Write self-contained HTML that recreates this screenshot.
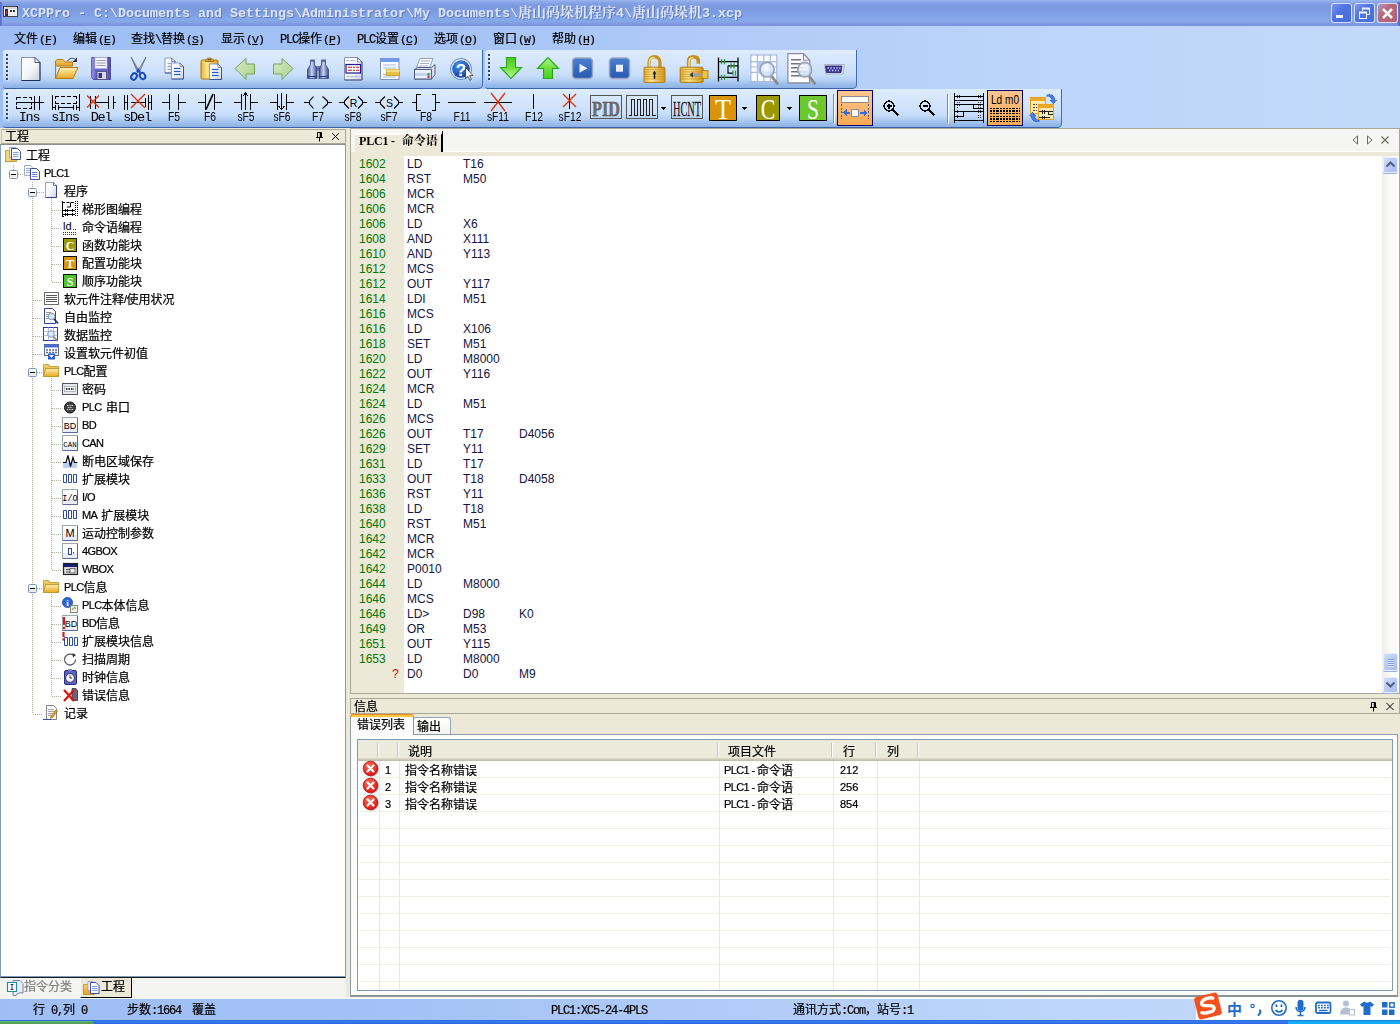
<!DOCTYPE html>
<html lang="zh-CN"><head><meta charset="utf-8"><title>XCPPro</title>
<style>

html,body{margin:0;padding:0}
body{width:1400px;height:1024px;overflow:hidden;position:relative;background:#ece9d8;
 font-family:"Liberation Sans","Noto Sans CJK SC","WenQuanYi Zen Hei",sans-serif;font-size:12px;color:#000}
.a{position:absolute}
.ui{font-family:"Liberation Mono","Noto Sans CJK SC","WenQuanYi Zen Hei",monospace;font-size:12px;white-space:nowrap}
.ui b,.ui span.l{font-size:12px;letter-spacing:-1.2px}
.t{position:absolute;white-space:nowrap;line-height:14px}
.ui,.tv{margin-top:1px;-webkit-text-stroke:.22px currentColor}
.tv .l{position:relative;top:-1px}
.ui .l{position:relative;top:0}
svg{position:absolute;overflow:visible}

.tl{font-family:"Liberation Mono",monospace;font-size:13.34px;letter-spacing:0;font-weight:bold}
.tc{font-family:"Liberation Serif","Noto Serif CJK SC",serif;font-size:14px;font-weight:bold}
.ui.mn span.k{font-size:11.500px;letter-spacing:-.9px;top:-.5px}

.tb{background:linear-gradient(to bottom,#ddecfe 0,#d2e4fc 42%,#c8defa 66%,#b3cff4 80%,#9cbeec 90%,#8cb1e6 100%);border-bottom:1px solid #3a62a8;border-right:1px solid #3e6cc0;box-sizing:border-box;border-radius:3px 0 5px 3px/3px 0 4px 3px}
.grip{position:absolute;width:2px;box-shadow:1px 1px 0 rgba(255,255,255,.35);background:repeating-linear-gradient(to bottom,#27418c 0,#27418c 2px,transparent 2px,transparent 4px)}

.lbm{font-family:"Liberation Mono",monospace;font-size:13.500px;letter-spacing:-1.200px;line-height:14px;color:#000}
.lbs{font-family:"Liberation Sans",sans-serif;font-size:12px;line-height:14px;color:#000;transform:scaleX(.86)}

.tv{font-family:"Liberation Sans","Noto Sans CJK SC","WenQuanYi Zen Hei",sans-serif;font-size:12px;line-height:14px;color:#000}

.cd{font-family:"Liberation Sans",sans-serif;font-size:12px;line-height:15px;color:#141444}

.tv .l{font-size:11px;letter-spacing:-.6px;word-spacing:2px}

</style></head>
<body>
<div class="a" id="dock" style="left:0;top:0;width:1400px;height:128px;background:linear-gradient(to right,#9ebef5 0,#a4c2f6 30%,#bdd5f9 75%,#c3d9fa 100%)"></div>
<div class="a" id="titlebar" style="left:0;top:0;width:1400px;height:26px;background:linear-gradient(to bottom,#9db6ee 0,#8ba7e8 2px,#7e9be2 5px,#7c99e0 9px,#7fa0e4 14px,#84a8e8 19px,#86a6e8 22px,#7e97e0 24px,#7a93dc 26px)"></div>
<div class="a" style="left:0;top:2px;width:2px;height:24px;background:linear-gradient(to right,#5c66cc,#7486da)"></div><div class="a" style="left:1397px;top:2px;width:3px;height:24px;background:linear-gradient(to right,#7486da,#5660c8)"></div>
<svg style="left:3px;top:5px" width="16" height="14" viewBox="0 0 16 14"><rect x="0.5" y="1.5" width="14" height="10" fill="#f4f4f4" stroke="#444"/><rect x="1" y="2" width="13" height="2" fill="#d8d8d8"/><rect x="2" y="4" width="3" height="7" fill="#1a2a90"/><rect x="3" y="6" width="1" height="3" fill="#e03030"/><rect x="7" y="5" width="2" height="2" fill="#333"/><rect x="10" y="5" width="2" height="2" fill="#333"/></svg>
<div class="a" style="left:1331px;top:3px;width:19px;height:18px;border:1px solid rgba(240,244,255,.8);border-radius:3px;background:linear-gradient(135deg,#7f98ea 0,#4f74e2 40%,#4270dc 100%)"></div><div class="a" style="left:1336px;top:15px;width:7px;height:3px;background:#f4f6fd"></div><div class="a" style="left:1354px;top:3px;width:19px;height:18px;border:1px solid rgba(240,244,255,.8);border-radius:3px;background:linear-gradient(135deg,#7f98ea 0,#4f74e2 40%,#4270dc 100%)"></div><svg style="left:1354px;top:3px" width="21" height="21" viewBox="0 0 21 21"><g fill="none" stroke="#f4f6fd"><path d="M8.5 8V5.5h7v6H13" stroke-width="1"/><path d="M8 5.5h8" stroke-width="2"/><rect x="5.5" y="9.5" width="7" height="6"/><path d="M5 9.5h8" stroke-width="2"/></g></svg><div class="a" style="left:1377px;top:3px;width:19px;height:18px;border:1px solid rgba(240,244,255,.8);border-radius:3px;background:linear-gradient(135deg,#b49cc4 0,#b46c80 35%,#b06272 100%)"></div><svg style="left:1377px;top:3px" width="21" height="21" viewBox="0 0 21 21"><path d="M6 6l9 9M15 6l-9 9" stroke="#fdf6f4" stroke-width="2.500" fill="none"/></svg>
<svg width="0" height="0" style="left:0;top:0"><defs>
<linearGradient id="gPage" x1="0" y1="0" x2="1" y2="1"><stop offset="0" stop-color="#ffffff"/><stop offset="0.55" stop-color="#f4f5fa"/><stop offset="1" stop-color="#c9cde0"/></linearGradient>
<linearGradient id="gFold" x1="0" y1="0" x2="0" y2="1"><stop offset="0" stop-color="#fff0b0"/><stop offset="1" stop-color="#eaa820"/></linearGradient>
<linearGradient id="gFoldB" x1="0" y1="0" x2="0" y2="1"><stop offset="0" stop-color="#f6d070"/><stop offset="1" stop-color="#e0a020"/></linearGradient>
<linearGradient id="gGreenD" x1="0" y1="0" x2="0" y2="1"><stop offset="0" stop-color="#4cc820"/><stop offset="0.5" stop-color="#6fe040"/><stop offset="1" stop-color="#c8f8a8"/></linearGradient>
<linearGradient id="gGreenU" x1="0" y1="0" x2="0" y2="1"><stop offset="0" stop-color="#b8f498"/><stop offset="0.5" stop-color="#6fe040"/><stop offset="1" stop-color="#4cd020"/></linearGradient>
<linearGradient id="gLGreen" x1="0" y1="0" x2="1" y2="1"><stop offset="0" stop-color="#d4eac4"/><stop offset="1" stop-color="#a9d48c"/></linearGradient>
<linearGradient id="gBlueBtn" x1="0" y1="0" x2="0" y2="1"><stop offset="0" stop-color="#4a80d0"/><stop offset="1" stop-color="#2658b0"/></linearGradient>
<linearGradient id="gGold" x1="0" y1="0" x2="1" y2="0"><stop offset="0" stop-color="#e8b030"/><stop offset="0.35" stop-color="#ffe890"/><stop offset="1" stop-color="#d89818"/></linearGradient>
<linearGradient id="gBino" x1="0" y1="0" x2="1" y2="0"><stop offset="0" stop-color="#3a4a8a"/><stop offset="0.45" stop-color="#c8d4f0"/><stop offset="1" stop-color="#3a4a8a"/></linearGradient>
<radialGradient id="gLens" cx="0.4" cy="0.35" r="0.7"><stop offset="0" stop-color="#ffffff"/><stop offset="1" stop-color="#b8d4f4"/></radialGradient>
<radialGradient id="gHelp" cx="0.4" cy="0.3" r="0.8"><stop offset="0" stop-color="#4a90e8"/><stop offset="1" stop-color="#0a3a9c"/></radialGradient>
<linearGradient id="gTb" x1="0" y1="0" x2="0" y2="1"><stop offset="0" stop-color="#dcebfe"/><stop offset="1" stop-color="#86ade4"/></linearGradient>
<radialGradient id="gErr" cx="0.4" cy="0.3" r="0.8"><stop offset="0" stop-color="#ff6a50"/><stop offset="1" stop-color="#d80c0c"/></radialGradient>
</defs></svg>
<div class="a tb" style="left:3px;top:50px;width:480px;height:39px"></div>
<div class="grip" style="left:6px;top:54px;height:26px"></div>
<div class="a tb" style="left:485px;top:50px;width:372px;height:39px"></div>
<div class="grip" style="left:488px;top:54px;height:26px"></div>
<svg style="left:19px;top:57px" width="24" height="24" viewBox="0 0 24 24"><path d="M2.500 .5h13.500l5 5v18h-18.500z" fill="url(#gPage)" stroke="#8a92b0"/><path d="M21 5.500v18H2.500" fill="none" stroke="#1e2c60" stroke-width="1"/><path d="M16 .5v5h5z" fill="#fff" stroke="#1e2c60" stroke-width=".8"/></svg>
<svg style="left:54px;top:57px" width="24" height="24" viewBox="0 0 24 24"><path d="M1.5 5c0-1.5 1-2.5 2.5-2.5h5l2 2.500h7.500v4h-17z" fill="url(#gFoldB)" stroke="#b87a10"/><path d="M1.500 21.500v-16" stroke="#b87a10" fill="none"/><path d="M1.500 21.500l4.500-11h18l-5 11z" fill="url(#gFold)" stroke="#b87a10"/><path d="M13.500 4c2-3 5.500-3.500 8-1.500" fill="none" stroke="#334" stroke-width="1"/><path d="M23 .5v4.500h-4.500z" fill="#334"/></svg>
<svg style="left:89px;top:57px" width="24" height="24" viewBox="0 0 24 24"><path d="M2.500 .5h19v22h-17l-2-2z" fill="#6a66c8" stroke="#4a48a0"/><rect x="2.500" y=".5" width="3" height="21" fill="#8884dc"/><rect x="19" y=".5" width="2.500" height="22" fill="#5652b4"/><rect x="6" y=".5" width="12" height="11" fill="#f4f4fa" stroke="#b0b0cc" stroke-width=".6"/><path d="M7.500 3.500h9M7.500 6h9M7.500 8.500h9" stroke="#9a9ab0" stroke-width="1"/><rect x="8" y="14.500" width="9.500" height="8" fill="#d8d8e4" stroke="#444478" stroke-width=".8"/><rect x="9.500" y="16" width="3.500" height="5" fill="#343478"/></svg>
<svg style="left:126px;top:57px" width="24" height="24" viewBox="0 0 24 24"><path d="M5 0l6.500 15h2.300z" fill="#8c96a8" stroke="#4a5060"  stroke-width=".6"/><path d="M20 0l-6.500 15h-2.300z" fill="#b4bccc" stroke="#4a5060" stroke-width=".6"/><ellipse cx="8" cy="19.500" rx="2.600" ry="3.400" transform="rotate(30 8 19.500)" fill="none" stroke="#1848c8" stroke-width="2"/><ellipse cx="16.500" cy="19" rx="2.600" ry="3.200" transform="rotate(-30 16.500 19)" fill="none" stroke="#1848c8" stroke-width="2"/><path d="M11 15.500l1.500-2.500 1.500 2.500" stroke="#1848c8" stroke-width="2" fill="none"/></svg>
<svg style="left:162.5px;top:57px" width="24" height="24" viewBox="0 0 24 24"><path d="M2 1h6.5l3.500 3.500v11.5h-10z" fill="url(#gPage)" stroke="#8892b8" stroke-width=".9"/><path d="M12 4.5v11.5h-10" fill="none" stroke="#3048a0" stroke-width=".9"/><path d="M8.5 1v3.500h3.500z" fill="#fff" stroke="#3048a0" stroke-width=".6"/><path d="M4.5 6.5h4.5" stroke="#88a8e8" stroke-width="1.200"/><path d="M4.5 9.5h4.5" stroke="#88a8e8" stroke-width="1.200"/><path d="M4.5 12.5h4.5" stroke="#88a8e8" stroke-width="1.200"/><path d="M8.5 6h8.5l3.500 3.500v12.5h-12z" fill="url(#gPage)" stroke="#8892b8" stroke-width=".9"/><path d="M20.5 9.5v12.5h-12" fill="none" stroke="#3048a0" stroke-width=".9"/><path d="M17 6v3.500h3.500z" fill="#fff" stroke="#3048a0" stroke-width=".6"/><path d="M11 11.5h6.5" stroke="#2858d0" stroke-width="1.200"/><path d="M11 14.5h6.5" stroke="#2858d0" stroke-width="1.200"/><path d="M11 17.5h6.5" stroke="#2858d0" stroke-width="1.200"/></svg>
<svg style="left:200px;top:57px" width="24" height="24" viewBox="0 0 24 24"><rect x="1" y="3" width="17" height="19" rx="1.500" fill="url(#gGold)" stroke="#b07808"/><path d="M5.500 4.500c0-2 1.500-3.500 4-3.500s4 1.500 4 3.500z" fill="#e8b848" stroke="#8a5c08" stroke-width=".8"/><rect x="7.500" y="2.300" width="4" height="1" fill="#5a4008"/><path d="M9.5 7h8.5l3.500 3.500v12h-12z" fill="url(#gPage)" stroke="#8892b8" stroke-width=".9"/><path d="M21.5 10.5v12h-12" fill="none" stroke="#3048a0" stroke-width=".9"/><path d="M18 7v3.500h3.500z" fill="#fff" stroke="#3048a0" stroke-width=".6"/><path d="M12 12.5h6.5" stroke="#2858d0" stroke-width="1.200"/><path d="M12 15.5h6.5" stroke="#2858d0" stroke-width="1.200"/><path d="M12 18.5h6.5" stroke="#2858d0" stroke-width="1.200"/></svg>
<svg style="left:234px;top:57px" width="24" height="24" viewBox="0 0 24 24"><path d="M1 11.500l11-10v5.500h8.500v10h-8.500v5.500z" fill="url(#gLGreen)" stroke="#7aa062" stroke-width="1"/></svg>
<svg style="left:271px;top:57px" width="24" height="24" viewBox="0 0 24 24"><path d="M22 11.500l-11-10v5.500h-8.500v10h8.500v5.500z" fill="url(#gLGreen)" stroke="#7aa062" stroke-width="1"/></svg>
<svg style="left:306px;top:57px" width="24" height="24" viewBox="0 0 24 24"><rect x="9.500" y="9" width="5" height="4.500" fill="#6a78b0"/><path d="M4.500 4h4v3.500l2.500 5v9h-9.500v-9l3-5z" fill="url(#gBino)" stroke="#2a3878" stroke-width=".7"/><path d="M15.500 4h4v3.500l3 5v9h-9.500v-9l2.500-5z" fill="url(#gBino)" stroke="#2a3878" stroke-width=".7"/><rect x="4" y="2.500" width="5" height="2" rx=".5" fill="#56649c"/><rect x="15" y="2.500" width="5" height="2" rx=".5" fill="#56649c"/><path d="M1.500 19.500h9.500M13 19.500h9.500" stroke="#2a3878" stroke-width="1.200"/></svg>
<svg style="left:342px;top:57px" width="24" height="24" viewBox="0 0 24 24"><path d="M2.500 .5h13l4.500 4.500v18h-17.500z" fill="url(#gPage)" stroke="#8a92b0"/><path d="M20 5v18H2.500" fill="none" stroke="#4a568a"/><path d="M15.500 .5v4.500h4.500z" fill="#fff" stroke="#4a568a" stroke-width=".7"/><path d="M4.500 3.500h9M4.500 19.500h13" stroke="#9ab0d8" stroke-width="1.200" stroke-dasharray="3 1"/><rect x="4" y="7.500" width="14.500" height="8.500" fill="#fdf8fa" stroke="#1a1a90" stroke-width="1.200"/><path d="M6 10.200h11M6 13.300h11" stroke="#c01818" stroke-width="1.100" stroke-dasharray="4 1 2 1"/></svg>
<svg style="left:378px;top:57px" width="24" height="24" viewBox="0 0 24 24"><rect x="2.500" y="1.500" width="18.500" height="21" fill="#fbfcff" stroke="#7c90c4"/><rect x="2.500" y="1.500" width="18.500" height="3.500" fill="#6e9cec"/><path d="M5 8h13M5 11h13M5 17.500h4M5 20h13" stroke="#a8b8d8" stroke-width="1"/><rect x="8.500" y="12.500" width="13" height="6" fill="#e8c040" stroke="#c09820" stroke-width=".8"/><rect x="8.500" y="12.500" width="13" height="2.500" fill="#f4dc80"/></svg>
<svg style="left:413px;top:57px" width="24" height="24" viewBox="0 0 24 24"><path d="M7 1.500h13l-3.500 9h-13z" fill="#fbfcff" stroke="#8088a8" stroke-width=".8"/><path d="M8 4h9M7 6.500h9M6 9h9" stroke="#a0a8c0" stroke-width=".9"/><path d="M1.500 12.500l3-2h14l3.500-3v10l-3.500 4.500h-17z" fill="#d8dcec" stroke="#4a5478" stroke-width=".9"/><rect x="1.500" y="12.500" width="17" height="9.500" fill="#eef0f8" stroke="#4a5478" stroke-width=".9"/><rect x="2" y="16" width="16" height="3" fill="#c4d4f0"/><rect x="14.500" y="16" width="2" height="2" fill="#20a030"/><rect x="14.500" y="18.500" width="2" height="2.500" fill="#d02020"/></svg>
<svg style="left:450px;top:57px" width="24" height="24" viewBox="0 0 24 24"><circle cx="11" cy="12" r="10.500" fill="#e8f0fc" stroke="#3a6cc0" stroke-width=".8"/><circle cx="11" cy="12" r="8.800" fill="url(#gHelp)"/><text x="11" y="18.500" text-anchor="middle" font-family="Liberation Sans,sans-serif" font-weight="bold" font-size="17" fill="#fff">?</text><path d="M15.500 10.500v11l2.500-2.200 1.800 4 1.600-.8-1.800-4h3.400z" fill="#fff" stroke="#222" stroke-width=".7"/></svg>
<svg style="left:500px;top:56px" width="24" height="24" viewBox="0 0 24 24" preserveAspectRatio="none"><path d="M6.500 1.500h9v10h6l-10.500 11-10.500-11h6z" fill="url(#gGreenD)" stroke="#28a818" stroke-width="1.200"/></svg>
<svg style="left:537px;top:56px" width="24" height="24" viewBox="0 0 24 24" preserveAspectRatio="none"><path d="M6.500 22.500h9v-10h6l-10.500-11-10.500 11h6z" fill="url(#gGreenU)" stroke="#28a818" stroke-width="1.200"/></svg>
<svg style="left:571px;top:57px" width="24" height="24" viewBox="0 0 24 24"><rect x="1.500" y="1" width="20" height="20.500" rx="3.500" fill="url(#gBlueBtn)" stroke="#98a4c0" stroke-width="1.500"/><path d="M8.500 6.700l8 4.500-8 4.500z" fill="#e8eefc"/></svg>
<svg style="left:608px;top:57px" width="24" height="24" viewBox="0 0 24 24"><rect x="1.500" y="1" width="20" height="20.500" rx="3.500" fill="url(#gBlueBtn)" stroke="#98a4c0" stroke-width="1.500"/><rect x="8" y="7.700" width="7" height="7" fill="#e8eefc"/></svg>
<svg style="left:643px;top:55px" width="24" height="28" viewBox="0 0 24 24" preserveAspectRatio="none"><path d="M6 12v-5.500c0-3 2.300-5 5.500-5s5.500 2 5.500 5v5.500" fill="none" stroke="#c8901c" stroke-width="3.200"/><path d="M6.300 12v-5.500c0-2.800 2.200-4.300 5.200-4.300" fill="none" stroke="#ffe48c" stroke-width="1.200"/><rect x="1" y="10.5" width="21" height="13" rx="1" fill="url(#gGold)" stroke="#a87408" stroke-width=".8"/><path d="M1.5 12.5h20" stroke="#c08a18" stroke-width=".6"/><path d="M1.5 14.5h20" stroke="#c08a18" stroke-width=".6"/><path d="M1.5 16.5h20" stroke="#c08a18" stroke-width=".6"/><path d="M1.5 18.5h20" stroke="#c08a18" stroke-width=".6"/><path d="M1.5 20.5h20" stroke="#c08a18" stroke-width=".6"/><path d="M11.500 13.500l1.800 2.500h-1.100v4.500h-1.400v-4.500h-1.100z" fill="#111"/></svg>
<svg style="left:679px;top:55px" width="29" height="28" viewBox="0 0 24 24" preserveAspectRatio="none"><path d="M8 12v-6.500c0-2.500 1.500-4 4-4s4 1.500 4 4v2" fill="none" stroke="#c8901c" stroke-width="3"/><path d="M8.300 11v-5.500c0-2.200 1.200-3.200 3.500-3.200" fill="none" stroke="#ffe48c" stroke-width="1.100"/><rect x="1" y="10.5" width="19" height="13" rx="1" fill="url(#gGold)" stroke="#a87408" stroke-width=".8"/><path d="M1.5 12.5h18" stroke="#c08a18" stroke-width=".6"/><path d="M1.5 14.5h18" stroke="#c08a18" stroke-width=".6"/><path d="M1.5 16.5h18" stroke="#c08a18" stroke-width=".6"/><path d="M1.5 18.5h18" stroke="#c08a18" stroke-width=".6"/><path d="M1.5 20.5h18" stroke="#c08a18" stroke-width=".6"/><rect x="19" y="13.500" width="5" height="6.500" fill="#f0c040" stroke="#a87408" stroke-width=".7"/><path d="M9 17h10" stroke="#98a0a8" stroke-width="2.400"/><path d="M9 17l2.500-2.500v5z" fill="#333"/></svg>
<svg style="left:716px;top:57px" width="24" height="25" viewBox="0 0 24 24" preserveAspectRatio="none"><path d="M2.500 .5v23M22 .5v23" stroke="#000" stroke-width="1.300"/><path d="M2.500 4.500h19.500M2.500 19.500h19.500M12 8.500h10M12 8.500v7h5" stroke="#000" stroke-width="1.100" fill="none"/><path d="M5.500 2v5M8.500 2v5M5.500 17v5M8.500 17v5M15 6v5M18 6v5M17 13v5M19.500 13v5" stroke="#18a028" stroke-width="1.200"/></svg>
<svg style="left:749px;top:53px" width="31" height="32" viewBox="0 0 24 24" preserveAspectRatio="none"><rect x="1.500" y="1.500" width="20" height="20" fill="#fbfcff" stroke="#a8b8dc" stroke-width=".9"/><path d="M6.5 1.500v20M1.500 6.5h20" stroke="#a8b8dc" stroke-width=".9"/><path d="M11.5 1.500v20M1.500 10.5h20" stroke="#a8b8dc" stroke-width=".9"/><path d="M16.5 1.500v20M1.500 14.5h20" stroke="#a8b8dc" stroke-width=".9"/><rect x="6.500" y="6.500" width="5" height="9" fill="#b4c8f0"/><path d="M17.5 17.5l5 6" stroke="#8a8a8a" stroke-width="2.200"/><circle cx="14" cy="12.5" r="5.500" fill="url(#gLens)" fill-opacity=".85" stroke="#9aa4b4" stroke-width="1.300"/></svg>
<svg style="left:786px;top:53px" width="30" height="32" viewBox="0 0 24 24" preserveAspectRatio="none"><path d="M1.500 .5h12.500l5 5v17h-17.500z" fill="#fbfcff" stroke="#8a8ea0"/><path d="M14 .5v5h5" fill="none" stroke="#8a8ea0" stroke-width=".8"/><path d="M4 5h8M4 8h12M4 11h12M4 14h12M4 17h12" stroke="#70747c" stroke-width="1.100"/><path d="M18.5 17.5l5 6" stroke="#8a8a8a" stroke-width="2.200"/><circle cx="15" cy="12.5" r="5.500" fill="url(#gLens)" fill-opacity=".85" stroke="#9aa4b4" stroke-width="1.300"/></svg>
<svg style="left:822px;top:56px" width="24" height="24" viewBox="0 0 24 24" preserveAspectRatio="none"><path d="M2.500 8.500h20l-1.500 9.500h-17z" fill="#e4e6f4" stroke="#a0a4c0" stroke-width=".8"/><path d="M3.500 10h16.500l-1 6.500h-14.500z" fill="#3c3894" stroke="#24226c" stroke-width=".8"/><path d="M5.500 12h13" stroke="#c8c8f0" stroke-width="1.300" stroke-dasharray="1.500 1.400"/><path d="M7 14.500h10" stroke="#c8c8f0" stroke-width="1.300" stroke-dasharray="1.500 1.400"/></svg>
<div class="a tb" style="left:3px;top:89px;width:1059px;height:39px"></div>
<div class="grip" style="left:6px;top:93px;height:27px"></div>
<svg style="left:0;top:0" width="1070" height="130" viewBox="0 0 1070 130" shape-rendering="crispEdges"><defs><linearGradient id="gAct" x1="0" y1="0" x2="0" y2="1"><stop offset="0" stop-color="#fbc690"/><stop offset="1" stop-color="#fea950"/></linearGradient></defs><path d="M17 97.500H32 M17 108.500H32" stroke="#000" stroke-width="1" fill="none" stroke-dasharray="4 2"/><path d="M16.500 97V109 M31.500 97V109" stroke="#000" stroke-width="1" fill="none" stroke-dasharray="3 1.500"/><path d="M16 102.500H44 M34.500 96V110 M39.500 96V110" stroke="#000" stroke-width="1" fill="none" /><path d="M52.500 95V110 M79.500 94V111" stroke="#000" stroke-width="1" fill="none" /><path d="M55 96.500H77 M55 103.500H77" stroke="#000" stroke-width="1" fill="none" stroke-dasharray="4 2"/><path d="M55.500 96V104 M76.500 96V104" stroke="#000" stroke-width="1" fill="none" stroke-dasharray="3 2"/><path d="M53 107.500H56 M58 107.500H74 M77 107.500H79 M55.500 105V110 M58.500 105V110 M73.500 105V110 M76.500 105V110" stroke="#000" stroke-width="1" fill="none" /><path d="M95 102.500H108 M113 102.500H116 M90.500 96V109 M95.500 96V109 M108.500 96V109 M113.500 96V109" stroke="#000" stroke-width="1" fill="none" /><path d="M87 95.500l12 12M99 95.500l-12 12" stroke="#e23408" stroke-width="1.35" fill="none" shape-rendering="geometricPrecision"/><path d="M124.500 95V110 M127.500 95V110 M124.500 102.500H128 M148.500 95V110 M151.500 95V110 M148.500 102.500H152 M131 102.500H146 M145.500 98V107" stroke="#000" stroke-width="1" fill="none" /><path d="M131 94l14 14M145 94l-14 14" stroke="#e23408" stroke-width="1.35" fill="none" shape-rendering="geometricPrecision"/><path d="M162 102.5H169 M178 102.5H186 M169 94V109.5 M178 94V109.5" stroke="#000" stroke-width="1" fill="none" /><path d="M198 102.5H205 M214 102.5H222 M205 94V109.5 M214 94V109.5" stroke="#000" stroke-width="1" fill="none" /><path d="M206 109.500L213 94" stroke="#000" stroke-width="1.7" fill="none" shape-rendering="geometricPrecision"/><path d="M234 102.5H241 M250 102.5H258 M241 94V109.5 M250 94V109.5" stroke="#000" stroke-width="1" fill="none" /><path d="M245.500 109.500V93 M242.500 96.500l3-3.500 3 3.500" stroke="#000" stroke-width="1" fill="none" /><path d="M270 102.5H277 M286 102.5H294 M277 94V109.5 M286 94V109.5" stroke="#000" stroke-width="1" fill="none" /><path d="M281.500 93V109.500 M278.500 106l3 3.500 3-3.500" stroke="#000" stroke-width="1" fill="none" /><path d="M304 102.500H309 M313.5 96.500L309.5 101V104L313.5 108.500 M322.5 96.500L327.5 101V104L322.5 108.500 M327.5 102.500H332" stroke="#000" stroke-width="1.1" fill="none" shape-rendering="geometricPrecision"/><path d="M339 102.500H344 M349 96.500L344.5 101V104L349 108.500 M358 96.500L362.5 101V104L358 108.500 M363 102.500H367" stroke="#000" stroke-width="1.1" fill="none" shape-rendering="geometricPrecision"/><text x="353.5" y="107" text-anchor="middle" font-family="Liberation Sans,sans-serif" font-size="10.500" fill="#000">R</text><path d="M375 102.500H380 M385 96.500L380.5 101V104L385 108.500 M394 96.500L398.5 101V104L394 108.500 M399 102.500H403" stroke="#000" stroke-width="1.1" fill="none" shape-rendering="geometricPrecision"/><text x="389.5" y="107" text-anchor="middle" font-family="Liberation Sans,sans-serif" font-size="10.500" fill="#000">S</text><path d="M412 102.500H416.500 M420.500 94.500H416.500V110.500H420.500 M431.500 94.500H435.500V110.500H431.500 M435.500 102.500H440" stroke="#000" stroke-width="1" fill="none" /><path d="M448 102.500H476" stroke="#000" stroke-width="1" fill="none" /><path d="M484 102.500H512" stroke="#000" stroke-width="1" fill="none" /><path d="M491 93l14 18M505 93l-14 18" stroke="#e23408" stroke-width="1.35" fill="none" shape-rendering="geometricPrecision"/><path d="M533.500 94V109" stroke="#000" stroke-width="1" fill="none" /><path d="M569.500 94V109" stroke="#000" stroke-width="1" fill="none" /><path d="M563 94l13 13M576 94l-13 13" stroke="#e23408" stroke-width="1.35" fill="none" shape-rendering="geometricPrecision"/><rect x="590.5" y="95.500" width="31" height="23" fill="none" stroke="#555" stroke-width="1"/><rect x="626.5" y="95.500" width="31" height="23" fill="none" stroke="#555" stroke-width="1"/><rect x="671.5" y="95.500" width="31" height="23" fill="none" stroke="#555" stroke-width="1"/><text x="592" y="116" textLength="28" lengthAdjust="spacingAndGlyphs" font-family="Liberation Serif,serif" font-weight="bold" font-size="22" fill="#707070" stroke="#444" stroke-width=".4">PID</text><path d="M629 115.500H631.500V99.500H634.500V115.500H637.500V99.500H640.500V115.500H643.500V99.500H646.500V115.500H649.500V99.500H652.500V115.500H656" stroke="#222" stroke-width="1.6" fill="none" /><path d="M660 107h6l-3 3z" fill="#000"/><text x="673" y="116" textLength="28" lengthAdjust="spacingAndGlyphs" font-family="Liberation Serif,serif" font-size="22" fill="#1a1a1a" stroke="#1a1a1a" stroke-width=".3">HCNT</text><rect x="709.5" y="95.500" width="27" height="25" fill="#d9940a" stroke="#000" stroke-width="1"/><text x="715" y="118.500" textLength="16" lengthAdjust="spacingAndGlyphs" font-family="Liberation Serif,serif" font-size="29" fill="#fff">T</text><rect x="756.5" y="95.500" width="23" height="25" fill="#9a9a00" stroke="#000" stroke-width="1"/><text x="760.75" y="118.500" textLength="14.5" lengthAdjust="spacingAndGlyphs" font-family="Liberation Serif,serif" font-size="29" fill="#fff">C</text><rect x="799.5" y="95.500" width="27" height="25" fill="#6cc82c" stroke="#000" stroke-width="1"/><text x="807" y="118.500" textLength="12" lengthAdjust="spacingAndGlyphs" font-family="Liberation Serif,serif" font-size="29" fill="#fff">S</text><path d="M741 107h6l-3 3z" fill="#000"/><path d="M786 107h6l-3 3z" fill="#000"/><path d="M833.5 94V123" stroke="#6a8cd0" stroke-width="1"/><path d="M834.5 95V124" stroke="#fff" stroke-width="1"/><path d="M947.5 94V123" stroke="#6a8cd0" stroke-width="1"/><path d="M948.5 95V124" stroke="#fff" stroke-width="1"/><rect x="837.5" y="90.500" width="35" height="35" fill="url(#gAct)" stroke="#00007c" stroke-width="1"/><rect x="987.5" y="90.500" width="35" height="35" fill="url(#gAct)" stroke="#00007c" stroke-width="1"/><rect x="841.500" y="96.500" width="27" height="6" fill="#fff" stroke="#8a8a8a"/><path d="M841.500 104V119 M868.500 104V119" stroke="#5a5a7a" stroke-width="1" fill="none" stroke-dasharray="2 1.500"/><rect x="851.500" y="109.500" width="7" height="7" fill="#fff" stroke="#8a8a9a"/><path d="M842.500 112.500l4-3.500v2.500h3.500v2.500h-3.500v2.500z" fill="#3a6cd8"/><path d="M867.500 112.500l-4-3.500v2.500h-3.500v2.500h3.500v2.500z" fill="#3a6cd8"/><path d="M892 109l6.500 6.500" stroke="#000" stroke-width="2.400"/><circle cx="889" cy="106" r="5" fill="#cfe6fa" stroke="#000" stroke-width="1.300"/><path d="M886.5 106h5" stroke="#000" stroke-width="1.600"/><path d="M889 103.5v5" stroke="#000" stroke-width="1.600"/><path d="M928 109l6.500 6.500" stroke="#000" stroke-width="2.400"/><circle cx="925" cy="106" r="5" fill="#cfe6fa" stroke="#000" stroke-width="1.300"/><path d="M922.5 106h5" stroke="#000" stroke-width="1.600"/><path d="M954.500 93V123 M983.500 93V123" stroke="#000" stroke-width="1.4" fill="none" /><path d="M955 96.500H983 M955 100.500H983 M955 104.500H983 M955 111.500H983 M955 120.500H983 M973.500 104.500V108.500H983 M955 116.500H963.500V111.500" stroke="#000" stroke-width="1.1" fill="none" /><path d="M957.500 94.500V122 M959.500 94.500V106 M978.500 94.500V122 M980.500 94.500V122" stroke="#333" stroke-width="1" fill="none" stroke-dasharray="1 1.500"/><text x="1005" y="104" text-anchor="middle" textLength="28" lengthAdjust="spacingAndGlyphs" font-family="Liberation Sans,sans-serif" font-size="12.500" fill="#000">Ld m0</text><path d="M990 108.5H1020" stroke="#000" stroke-width="1.3" fill="none" stroke-dasharray="2.200 1"/><path d="M990 111.1H1020" stroke="#000" stroke-width="1.3" fill="none" stroke-dasharray="2.200 1"/><path d="M990 113.7H1020" stroke="#000" stroke-width="1.3" fill="none" stroke-dasharray="2.200 1"/><path d="M990 116.3H1020" stroke="#000" stroke-width="1.3" fill="none" stroke-dasharray="2.200 1"/><path d="M990 118.9H1020" stroke="#000" stroke-width="1.3" fill="none" stroke-dasharray="2.200 1"/><path d="M990 121.5H1020" stroke="#000" stroke-width="1.3" fill="none" stroke-dasharray="2.200 1"/><rect x="1030.500" y="97.500" width="15" height="16" fill="#fde8b0" stroke="#e8a020"/><rect x="1030.500" y="97.500" width="15" height="3" fill="#f0a828"/><path d="M1033 104.500H1043 M1033 107.500H1043 M1033 110.500H1043" stroke="#444" stroke-width="1.2" fill="none" stroke-dasharray="1.500 1"/><rect x="1038.500" y="104.500" width="15" height="15" fill="#fde8b0" stroke="#e8a020"/><rect x="1038.500" y="104.500" width="15" height="3" fill="#f0a828"/><path d="M1039 111.500H1053 M1039 117.500H1050 M1042.500 109.500V113.500 M1044.500 109.500V113.500 M1042.500 115.500V119 M1044.500 115.500V119 M1048.500 111.500V114.500H1052.500" stroke="#222" stroke-width="1" fill="none" /><path d="M1046 96c3-3 8-2 9 4l1.500 0-3 4-3.500-4h2c-1-3-3-4-6-4z" fill="#4a7ce0" stroke="#3060c0" stroke-width=".5"/><path d="M1040 121c-3 2-8 1-9-5l-1.500 0 3-4 3.500 4h-2c1 3 3 4 6 5z" fill="#4a7ce0" stroke="#3060c0" stroke-width=".5"/></svg>
<div class="a" style="left:0;top:128px;width:346px;height:16px;background:#ece9d8"></div>
<div class="a" style="left:1px;top:129px;width:343px;height:13px;border:1px solid #aca899;border-left-color:#c8c4b4"></div>
<svg style="left:314px;top:131px" width="32" height="12" viewBox="0 0 32 12"><path d="M3.500 1.500h4v5h-4z M2 6.500h7 M5.500 6.500v4" stroke="#000" fill="none"/><path d="M6.500 1.500v5" stroke="#000" stroke-width="1.500"/><path d="M18 2l7 7M25 2l-7 7" stroke="#000" stroke-width="1" fill="none"/></svg>
<div class="a" style="left:0;top:144px;width:346px;height:834px;background:#fff;border:1px solid #7f9db9;border-top-color:#8e8f8f;border-bottom:1px solid #1c1c1c;box-sizing:border-box;box-shadow:inset 0 -1px 0 #7f9db9"></div>
<div class="a" style="left:0;top:978px;width:346px;height:21px;background:#f4f4f2"></div>
<div class="a" style="left:80px;top:978px;width:50px;height:19px;background:#ece9d8;border:1px solid #000;border-top:none;border-left:1px solid #fff"></div>
<svg style="left:6px;top:980px" width="18" height="16" viewBox="0 0 18 16"><path d="M7 .5h7l3 3v9.500c-3-1-6 .5-7 2.500h-3z" fill="#e8ecf4" stroke="#5a6a8a" stroke-width=".8"/><path d="M1.500 2.500h9v9h-9z" fill="#fff" stroke="#2a8a9a" stroke-width="1.200"/><path d="M4.500 4.500h3M6 4.500v5M4.500 9.500h3" stroke="#1a3a7a" stroke-width="1"/></svg>
<svg style="left:83px;top:980px" width="17" height="15" viewBox="0 0 17 15"><path d="M.5 4.500h5l1 1h5v9h-11z" fill="url(#gFoldB)" stroke="#b8902c" stroke-width=".8"/><path d="M5 1.500h5l2 2v7h-7z" fill="#fff" stroke="#8a98c0" stroke-width=".8"/><path d="M7.500 2.500h5.500l3 3v8h-8.500z" fill="#fff" stroke="#2a3a9a" stroke-width=".9"/><path d="M9 6.500h5.500M9 8.500h5.500M9 10.500h5.500" stroke="#6a8ad8" stroke-width=".9"/></svg>
<div class="a" style="left:346px;top:128px;width:5px;height:870px;background:#ece9d8"></div>
<svg style="left:0;top:0" width="346" height="980" viewBox="0 0 346 980"><g transform="translate(5,146)"><path d="M.5 4.500h5l1 1.500v9.500h-6z" fill="#f4d880" stroke="#b89030" stroke-width=".8"/><path d="M.5 15.500h11v-2" fill="#e8b848" stroke="#b89030" stroke-width=".8"/><path d="M4.500 1.500h6l2 2v8h-8z" fill="#fff" stroke="#8a98c0" stroke-width=".8"/><path d="M6.500 2.500h6l3 3v8h-9z" fill="#fff" stroke="#2a3a9a" stroke-width=".9"/><path d="M8 6.500h5.500M8 8.500h5.500M8 10.500h5.500" stroke="#7a9ae0" stroke-width=".9"/></g><g transform="translate(24,164)"><path d="M.5 1.500h6l2 2v8h-8z" fill="#fff" stroke="#8a98c0" stroke-width=".8"/><path d="M2 4.500h4M2 6.500h5M2 8.500h5" stroke="#8aa6e4" stroke-width=".9"/><path d="M6.500 4.500h6l3 3v8h-9z" fill="#fff" stroke="#2a3a9a" stroke-width=".9"/><path d="M8 8.500h5.500M8 10.500h5.500M8 12.500h5.500" stroke="#5a80e0" stroke-width=".9"/></g><path d="M18 174.5H24" stroke="#b0ac98" stroke-width="1" stroke-dasharray="1 1"/><g transform="translate(43,182)"><path d="M2.500 .5h8l3 3v12h-11z" fill="url(#gPage)" stroke="#8a98c0" stroke-width=".9"/><path d="M13.500 3.500v12h-11" fill="none" stroke="#2a3a8a" stroke-width=".9"/><path d="M10.500 .5v3h3" fill="none" stroke="#2a3a8a" stroke-width=".7"/></g><path d="M37 192.5H44" stroke="#b0ac98" stroke-width="1" stroke-dasharray="1 1"/><g transform="translate(62,201)"><path d="M.5 0V16" stroke="#000"/><path d="M13.500 0V16M15.500 0V16" stroke="#000" stroke-dasharray="1 1"/><path d="M0 1.500h12" stroke="#000" stroke-dasharray="3 1.500"/><path d="M0 9.500H13M0 13.500H13M8.500 1.500V6H5 M3.500 8v3M5.500 8v3M3.500 12v3M5.500 12v3M10.500 8v3M10.500 12v3M0 15.500h2" stroke="#000" stroke-width="1" fill="none"/></g><path d="M52 210.5H61" stroke="#b0ac98" stroke-width="1" stroke-dasharray="1 1"/><g transform="translate(62,219)"><text x="1" y="11" font-family="Liberation Sans,sans-serif" font-size="11" fill="#000">ld</text><path d="M1 13.500h14M1 15.500h14" stroke="#333" stroke-dasharray="1 1"/><path d="M11 10.500h4" stroke="#333" stroke-dasharray="1 1"/></g><path d="M52 228.5H61" stroke="#b0ac98" stroke-width="1" stroke-dasharray="1 1"/><g transform="translate(62,237)"><rect x="1.500" y="1.500" width="13" height="13" fill="#9a9a00" stroke="#111"/><text x="8" y="12.500" text-anchor="middle" font-family="Liberation Serif,serif" font-weight="bold" font-size="12" fill="#fff">C</text></g><path d="M52 246.5H61" stroke="#b0ac98" stroke-width="1" stroke-dasharray="1 1"/><g transform="translate(62,255)"><rect x="1.500" y="1.500" width="13" height="13" fill="#d9940a" stroke="#111"/><text x="8" y="12.500" text-anchor="middle" font-family="Liberation Serif,serif" font-weight="bold" font-size="12" fill="#fff">T</text></g><path d="M52 264.5H61" stroke="#b0ac98" stroke-width="1" stroke-dasharray="1 1"/><g transform="translate(62,273)"><rect x="1.500" y="1.500" width="13" height="13" fill="#4cc430" stroke="#111"/><text x="8" y="12.500" text-anchor="middle" font-family="Liberation Serif,serif" font-weight="bold" font-size="12" fill="#fff">S</text></g><path d="M52 282.5H61" stroke="#b0ac98" stroke-width="1" stroke-dasharray="1 1"/><g transform="translate(43,290)"><rect x="1.500" y="2.500" width="14" height="12" fill="#fff" stroke="#6a6a6a"/><path d="M3 5.500h11M3 7.500h11M3 9.500h11M3 11.500h11" stroke="#555" stroke-width="1"/></g><path d="M33 300.5H43" stroke="#b0ac98" stroke-width="1" stroke-dasharray="1 1"/><g transform="translate(43,308)"><path d="M1.500 .5h8l3 3v12h-11z" fill="#fff" stroke="#1a2a9a" stroke-width=".9"/><path d="M3 4.500h5M3 6.500h7M3 8.500h7M3 10.500h7" stroke="#888" stroke-width=".9"/><circle cx="8.500" cy="8.500" r="3.300" fill="#d8e8fc" fill-opacity=".85" stroke="#8a9ab0"/><path d="M11 11l4 4.500" stroke="#1a2a9a" stroke-width="1.800"/></g><path d="M33 318.5H43" stroke="#b0ac98" stroke-width="1" stroke-dasharray="1 1"/><g transform="translate(43,326)"><rect x=".5" y="1.500" width="14" height="13" fill="#fff" stroke="#1a2a9a" stroke-width=".9"/><path d="M.5 5.500h14M.5 9.500h14M5.500 1.500v13M10.500 1.500v13" stroke="#9ab0dc" stroke-width=".8"/><circle cx="8" cy="8" r="3.300" fill="#d8e8fc" fill-opacity=".85" stroke="#8a9ab0"/><path d="M10.500 10.500l4 4.500" stroke="#888" stroke-width="1.800"/></g><path d="M33 336.5H43" stroke="#b0ac98" stroke-width="1" stroke-dasharray="1 1"/><g transform="translate(43,344)"><rect x="1.500" y=".5" width="14" height="11" fill="#fff" stroke="#4a5a9a" stroke-width=".9"/><rect x="1.500" y=".5" width="14" height="3" fill="#4a6ad0"/><path d="M3 6h11M3 8.500h11" stroke="#5a6aa0" stroke-width="1.300" stroke-dasharray="2 1"/><path d="M5 9.500h7v6h-7z" fill="#2a5ad0"/><path d="M6 11l2.500 3 2.500-3z" fill="#fff"/></g><path d="M33 354.5H43" stroke="#b0ac98" stroke-width="1" stroke-dasharray="1 1"/><g transform="translate(43,362)"><path d="M.5 2.500h5l1.500 2h8.500v10h-15z" fill="url(#gFoldB)" stroke="#b8902c" stroke-width=".8"/><path d="M.5 14.500l2-8h13.500l-1 8z" fill="url(#gFold)" stroke="#b8902c" stroke-width=".8"/></g><path d="M37 372.5H44" stroke="#b0ac98" stroke-width="1" stroke-dasharray="1 1"/><g transform="translate(62,381)"><rect x=".5" y="2.500" width="15" height="11" fill="#e8e8f0" stroke="#556"/><rect x="2.500" y="5.500" width="11" height="5" fill="#fff" stroke="#99a" stroke-width=".7"/><path d="M4 8h8" stroke="#333" stroke-width="2" stroke-dasharray="1.500 1"/></g><path d="M52 390.5H61" stroke="#b0ac98" stroke-width="1" stroke-dasharray="1 1"/><g transform="translate(62,399)"><circle cx="8" cy="8.500" r="5.500" fill="#444" stroke="#111"/><path d="M5 6.500h6M5 10.500h6M6 8.500h4" stroke="#ddd" stroke-width="1.200" stroke-dasharray="1.300 1"/></g><path d="M52 408.5H61" stroke="#b0ac98" stroke-width="1" stroke-dasharray="1 1"/><g transform="translate(62,417)"><rect x=".5" y=".5" width="15" height="15" fill="#fff" stroke="#9aa"/><path d="M15.500 1v14.500H1" stroke="#5a6a9a" fill="none"/><rect x="1" y="10" width="14" height="5" fill="#dfe4f4" opacity=".7"/><text x="8" y="11.500" text-anchor="middle" font-family="Liberation Sans,sans-serif" font-size="9" fill="#000">BD</text></g><path d="M52 426.5H61" stroke="#b0ac98" stroke-width="1" stroke-dasharray="1 1"/><g transform="translate(62,435)"><rect x=".5" y=".5" width="15" height="15" fill="#fff" stroke="#9aa"/><path d="M15.500 1v14.500H1" stroke="#5a6a9a" fill="none"/><rect x="1" y="10" width="14" height="5" fill="#dfe4f4" opacity=".7"/><text x="8" y="11.500" text-anchor="middle" font-family="Liberation Mono,monospace" font-size="7.5" fill="#000">CAN</text></g><path d="M52 444.5H61" stroke="#b0ac98" stroke-width="1" stroke-dasharray="1 1"/><g transform="translate(62,453)"><path d="M1 9h14v6h-14z" fill="#bcd0f4"/><path d="M1 9.500h3l2-7 2.500 11 2.500-9 1.500 5h3" fill="none" stroke="#000" stroke-width="1.200"/></g><path d="M52 462.5H61" stroke="#b0ac98" stroke-width="1" stroke-dasharray="1 1"/><g transform="translate(62,471)"><path d="M1.500 3.500h3v8h-3zM6.500 3.500h3v8h-3zM11.500 3.500h3v8h-3z" fill="#fff" stroke="#2a4aa8" stroke-width="1"/></g><path d="M52 480.5H61" stroke="#b0ac98" stroke-width="1" stroke-dasharray="1 1"/><g transform="translate(62,489)"><rect x=".5" y=".5" width="15" height="15" fill="#fff" stroke="#9aa"/><path d="M15.500 1v14.500H1" stroke="#5a6a9a" fill="none"/><rect x="1" y="10" width="14" height="5" fill="#dfe4f4" opacity=".7"/><text x="8" y="11.500" text-anchor="middle" font-family="Liberation Mono,monospace" font-size="8.5" fill="#000">I/O</text></g><path d="M52 498.5H61" stroke="#b0ac98" stroke-width="1" stroke-dasharray="1 1"/><g transform="translate(62,507)"><path d="M1.500 3.500h3v8h-3zM6.500 3.500h3v8h-3zM11.500 3.500h3v8h-3z" fill="#fff" stroke="#2a4aa8" stroke-width="1"/></g><path d="M52 516.5H61" stroke="#b0ac98" stroke-width="1" stroke-dasharray="1 1"/><g transform="translate(62,525)"><rect x=".5" y=".5" width="15" height="15" fill="#fff" stroke="#9aa"/><path d="M15.500 1v14.500H1" stroke="#5a6a9a" fill="none"/><rect x="1" y="10" width="14" height="5" fill="#dfe4f4" opacity=".7"/><text x="8" y="11.500" text-anchor="middle" font-family="Liberation Sans,sans-serif" font-size="11" fill="#000">M</text></g><path d="M52 534.5H61" stroke="#b0ac98" stroke-width="1" stroke-dasharray="1 1"/><g transform="translate(62,543)"><rect x=".5" y=".5" width="15" height="15" fill="#fff" stroke="#9aa"/><path d="M15.500 1v14.500H1" stroke="#5a6a9a" fill="none"/><rect x="1" y="10" width="14" height="5" fill="#dfe4f4" opacity=".7"/><text x="8" y="11.500" text-anchor="middle" font-family="Liberation Mono,monospace" font-size="8" fill="#000"></text><rect x="6.500" y="5.500" width="3" height="6" fill="#fff" stroke="#2a4ab0"/><rect x="11" y="9" width="1" height="1.500" fill="#2a4ab0"/></g><path d="M52 552.5H61" stroke="#b0ac98" stroke-width="1" stroke-dasharray="1 1"/><g transform="translate(62,561)"><rect x="1.500" y="2.500" width="14" height="11" fill="#d8d8d8" stroke="#222" stroke-width="1.200"/><rect x="2" y="3" width="13" height="3" fill="#1c1c6c"/><path d="M4 8.500h9M4 11h9" stroke="#555" stroke-width="1"/><rect x="8" y="7.500" width="5" height="4.500" fill="#eee" stroke="#444" stroke-width=".7"/></g><path d="M52 570.5H61" stroke="#b0ac98" stroke-width="1" stroke-dasharray="1 1"/><g transform="translate(43,578)"><path d="M.5 2.500h5l1.500 2h8.500v10h-15z" fill="url(#gFoldB)" stroke="#b8902c" stroke-width=".8"/><path d="M.5 14.500l2-8h13.500l-1 8z" fill="url(#gFold)" stroke="#b8902c" stroke-width=".8"/></g><path d="M37 588.5H44" stroke="#b0ac98" stroke-width="1" stroke-dasharray="1 1"/><g transform="translate(62,597)"><circle cx="5.500" cy="5.500" r="5" fill="#2a6ad8" stroke="#1a3a9a" stroke-width=".8"/><text x="5.500" y="9" text-anchor="middle" font-family="Liberation Serif,serif" font-weight="bold" font-size="9" fill="#fff">i</text><rect x="8.500" y="8.500" width="7" height="7" fill="#f4f4e8" stroke="#666" stroke-width=".8"/><path d="M10 13l2-2.500 2 1" stroke="#3a8a3a" fill="none" stroke-width="1"/></g><path d="M52 606.5H61" stroke="#b0ac98" stroke-width="1" stroke-dasharray="1 1"/><g transform="translate(62,615)"><rect x=".5" y=".5" width="15" height="15" fill="#fff" stroke="#9aa"/><path d="M15.500 1v14.500H1" stroke="#5a6a9a" fill="none"/><rect x="1" y="10" width="14" height="5" fill="#dfe4f4" opacity=".7"/><text x="9" y="11.500" text-anchor="middle" font-family="Liberation Sans,sans-serif" font-size="9" fill="#000">BD</text><path d="M2 2v8" stroke="#e01818" stroke-width="2.200"/><circle cx="2" cy="13" r="1.300" fill="#e01818"/></g><path d="M52 624.5H61" stroke="#b0ac98" stroke-width="1" stroke-dasharray="1 1"/><g transform="translate(62,633)"><g transform="translate(1,1)"><path d="M1.500 3.500h3v8h-3zM6.500 3.500h3v8h-3zM11.500 3.500h3v8h-3z" fill="#fff" stroke="#2a4aa8" stroke-width="1"/></g><path d="M1.500 -1v5" stroke="#e01818" stroke-width="2.200"/><circle cx="1.500" cy="6.500" r="1.200" fill="#e01818"/></g><path d="M52 642.5H61" stroke="#b0ac98" stroke-width="1" stroke-dasharray="1 1"/><g transform="translate(62,651)"><path d="M13.500 8.500a5.500 5.500 0 1 1-2-4.200" fill="none" stroke="#555" stroke-width="1.200"/><path d="M10.500 2l3.500 2-3 2.500z" fill="#333"/></g><path d="M52 660.5H61" stroke="#b0ac98" stroke-width="1" stroke-dasharray="1 1"/><g transform="translate(62,669)"><rect x="2.500" y="1.500" width="12" height="14" rx="1.500" fill="#5a62c8" stroke="#2a2a8a"/><circle cx="8" cy="9" r="4.300" fill="#f4f4fc" stroke="#333" stroke-width=".8"/><path d="M8 6.500v2.500h2" stroke="#222" fill="none" stroke-width=".9"/><rect x="6" y="0" width="4" height="2" fill="#88a"/></g><path d="M52 678.5H61" stroke="#b0ac98" stroke-width="1" stroke-dasharray="1 1"/><g transform="translate(62,687)"><path d="M10 1.500h4l1.500 2v10h-5.500z" fill="#667" stroke="#334" stroke-width=".8"/><path d="M2 3l10 11M12 3l-10 11" stroke="#e01010" stroke-width="2.200"/></g><path d="M52 696.5H61" stroke="#b0ac98" stroke-width="1" stroke-dasharray="1 1"/><g transform="translate(43,704)"><path d="M3.500 1.500h7l3 3v11h-10z" fill="#fff" stroke="#777" stroke-width=".9"/><path d="M5 5.500h6M5 7.500h7M5 9.500h7M5 11.500h4" stroke="#99a" stroke-width=".9"/><path d="M14.500 7l-5 6.500-2 .8.500-2 5-6.500z" fill="#f0b020" stroke="#8a5a08" stroke-width=".7"/><path d="M0 15.500h8" stroke="#3a4ab0" stroke-width="1"/></g><path d="M33 714.5H43" stroke="#b0ac98" stroke-width="1" stroke-dasharray="1 1"/><path d="M13.5 165V170" stroke="#b0ac98" stroke-width="1" stroke-dasharray="1 1"/><path d="M32.5 182V714" stroke="#b0ac98" stroke-width="1" stroke-dasharray="1 1"/><path d="M51.5 198V282" stroke="#b0ac98" stroke-width="1" stroke-dasharray="1 1"/><path d="M51.5 378V570" stroke="#b0ac98" stroke-width="1" stroke-dasharray="1 1"/><path d="M51.5 594V696" stroke="#b0ac98" stroke-width="1" stroke-dasharray="1 1"/><rect x="9.5" y="170.5" width="8" height="8" rx="1" fill="#fff" stroke="#7898b5"/><rect x="10.5" y="175" width="6" height="3" fill="#e4e0d4" opacity=".6"/><path d="M11 174.5h5" stroke="#000" stroke-width="1"/><rect x="28.5" y="188.5" width="8" height="8" rx="1" fill="#fff" stroke="#7898b5"/><rect x="29.5" y="193" width="6" height="3" fill="#e4e0d4" opacity=".6"/><path d="M30 192.5h5" stroke="#000" stroke-width="1"/><rect x="28.5" y="368.5" width="8" height="8" rx="1" fill="#fff" stroke="#7898b5"/><rect x="29.5" y="373" width="6" height="3" fill="#e4e0d4" opacity=".6"/><path d="M30 372.5h5" stroke="#000" stroke-width="1"/><rect x="28.5" y="584.5" width="8" height="8" rx="1" fill="#fff" stroke="#7898b5"/><rect x="29.5" y="589" width="6" height="3" fill="#e4e0d4" opacity=".6"/><path d="M30 588.5h5" stroke="#000" stroke-width="1"/></svg>
<div class="a" style="left:351px;top:128px;width:1049px;height:30px;background:#ece9d8"></div>
<div class="a" style="left:350px;top:128px;width:1050px;height:566px;border:1px solid #aca899;box-sizing:border-box;background:#ece9d8"></div>
<div class="a" style="left:351px;top:129px;width:1048px;height:23px;background:#f5f5f4;border-bottom:1px solid #fff;box-sizing:border-box"></div>
<div class="a" style="left:355px;top:133px;width:87px;height:19px;background:#ece9d8;border-right:1px solid #000;border-top:2px solid #fff;box-sizing:border-box"></div>
<div class="a" style="left:442px;top:131px;width:1px;height:21px;background:#000"></div>
<svg style="left:1350px;top:134px" width="44" height="12" viewBox="0 0 44 12"><path d="M7.500 2v8l-4.500-4z M17.500 2v8l4.500-4z" fill="none" stroke="#6a6858" stroke-width="1"/><path d="M31.500 2.500l7 7M38.500 2.500l-7 7" stroke="#6a6858" stroke-width="1.100"/></svg>
<div class="a" style="left:351px;top:156px;width:53px;height:537px;background:#ece9d8"></div>
<div class="a" style="left:404px;top:156px;width:978px;height:537px;background:#fff"></div>
<div class="a" style="left:1382px;top:156px;width:17px;height:537px;background:linear-gradient(to right,#efede5 0,#f8f8f4 40%,#fefefb 100%)"></div>
<div class="a" style="left:1383px;top:157px;width:13px;height:14px;border-radius:2px;background:linear-gradient(135deg,#d0dcfc 0,#b6c8f6 60%,#a8bcf0 100%);border:1px solid #e8eefc;box-shadow:0 1px 0 #9ab0e8"></div><svg style="left:1384px;top:158px" width="13" height="13" viewBox="0 0 13 13"><path d="M2.500 8.500l4-4 4 4" fill="none" stroke="#4d6185" stroke-width="2"/></svg>
<div class="a" style="left:1383px;top:653px;width:13px;height:16px;border-radius:2px;background:linear-gradient(135deg,#d0dcfc 0,#b6c8f6 60%,#a8bcf0 100%);border:1px solid #e8eefc;box-shadow:0 1px 0 #9ab0e8"></div><svg style="left:1385px;top:654px" width="13" height="13" viewBox="0 0 13 13"><path d="M3 5.500h6M3 7.500h6M3 9.500h6M3 11.500h6" stroke="#7a98ec" stroke-width="1"/><path d="M3 6.500h6M3 8.500h6M3 10.500h6M3 12.500h6" stroke="#e4ecfc" stroke-width="1"/></svg>
<div class="a" style="left:1383px;top:677px;width:13px;height:14px;border-radius:2px;background:linear-gradient(135deg,#d0dcfc 0,#b6c8f6 60%,#a8bcf0 100%);border:1px solid #e8eefc;box-shadow:0 1px 0 #9ab0e8"></div><svg style="left:1384px;top:678px" width="13" height="13" viewBox="0 0 13 13"><path d="M2.500 4.500l4 4 4-4" fill="none" stroke="#4d6185" stroke-width="2"/></svg>
<div class="t cd" style="left:359px;top:157px;color:#007800">1602</div>
<div class="t cd" style="left:407px;top:157px">LD</div>
<div class="t cd" style="left:463px;top:157px">T16</div>
<div class="t cd" style="left:359px;top:172px;color:#007800">1604</div>
<div class="t cd" style="left:407px;top:172px">RST</div>
<div class="t cd" style="left:463px;top:172px">M50</div>
<div class="t cd" style="left:359px;top:187px;color:#007800">1606</div>
<div class="t cd" style="left:407px;top:187px">MCR</div>
<div class="t cd" style="left:359px;top:202px;color:#007800">1606</div>
<div class="t cd" style="left:407px;top:202px">MCR</div>
<div class="t cd" style="left:359px;top:217px;color:#007800">1606</div>
<div class="t cd" style="left:407px;top:217px">LD</div>
<div class="t cd" style="left:463px;top:217px">X6</div>
<div class="t cd" style="left:359px;top:232px;color:#007800">1608</div>
<div class="t cd" style="left:407px;top:232px">AND</div>
<div class="t cd" style="left:463px;top:232px">X111</div>
<div class="t cd" style="left:359px;top:247px;color:#007800">1610</div>
<div class="t cd" style="left:407px;top:247px">AND</div>
<div class="t cd" style="left:463px;top:247px">Y113</div>
<div class="t cd" style="left:359px;top:262px;color:#007800">1612</div>
<div class="t cd" style="left:407px;top:262px">MCS</div>
<div class="t cd" style="left:359px;top:277px;color:#007800">1612</div>
<div class="t cd" style="left:407px;top:277px">OUT</div>
<div class="t cd" style="left:463px;top:277px">Y117</div>
<div class="t cd" style="left:359px;top:292px;color:#007800">1614</div>
<div class="t cd" style="left:407px;top:292px">LDI</div>
<div class="t cd" style="left:463px;top:292px">M51</div>
<div class="t cd" style="left:359px;top:307px;color:#007800">1616</div>
<div class="t cd" style="left:407px;top:307px">MCS</div>
<div class="t cd" style="left:359px;top:322px;color:#007800">1616</div>
<div class="t cd" style="left:407px;top:322px">LD</div>
<div class="t cd" style="left:463px;top:322px">X106</div>
<div class="t cd" style="left:359px;top:337px;color:#007800">1618</div>
<div class="t cd" style="left:407px;top:337px">SET</div>
<div class="t cd" style="left:463px;top:337px">M51</div>
<div class="t cd" style="left:359px;top:352px;color:#007800">1620</div>
<div class="t cd" style="left:407px;top:352px">LD</div>
<div class="t cd" style="left:463px;top:352px">M8000</div>
<div class="t cd" style="left:359px;top:367px;color:#007800">1622</div>
<div class="t cd" style="left:407px;top:367px">OUT</div>
<div class="t cd" style="left:463px;top:367px">Y116</div>
<div class="t cd" style="left:359px;top:382px;color:#007800">1624</div>
<div class="t cd" style="left:407px;top:382px">MCR</div>
<div class="t cd" style="left:359px;top:397px;color:#007800">1624</div>
<div class="t cd" style="left:407px;top:397px">LD</div>
<div class="t cd" style="left:463px;top:397px">M51</div>
<div class="t cd" style="left:359px;top:412px;color:#007800">1626</div>
<div class="t cd" style="left:407px;top:412px">MCS</div>
<div class="t cd" style="left:359px;top:427px;color:#007800">1626</div>
<div class="t cd" style="left:407px;top:427px">OUT</div>
<div class="t cd" style="left:463px;top:427px">T17</div>
<div class="t cd" style="left:519px;top:427px">D4056</div>
<div class="t cd" style="left:359px;top:442px;color:#007800">1629</div>
<div class="t cd" style="left:407px;top:442px">SET</div>
<div class="t cd" style="left:463px;top:442px">Y11</div>
<div class="t cd" style="left:359px;top:457px;color:#007800">1631</div>
<div class="t cd" style="left:407px;top:457px">LD</div>
<div class="t cd" style="left:463px;top:457px">T17</div>
<div class="t cd" style="left:359px;top:472px;color:#007800">1633</div>
<div class="t cd" style="left:407px;top:472px">OUT</div>
<div class="t cd" style="left:463px;top:472px">T18</div>
<div class="t cd" style="left:519px;top:472px">D4058</div>
<div class="t cd" style="left:359px;top:487px;color:#007800">1636</div>
<div class="t cd" style="left:407px;top:487px">RST</div>
<div class="t cd" style="left:463px;top:487px">Y11</div>
<div class="t cd" style="left:359px;top:502px;color:#007800">1638</div>
<div class="t cd" style="left:407px;top:502px">LD</div>
<div class="t cd" style="left:463px;top:502px">T18</div>
<div class="t cd" style="left:359px;top:517px;color:#007800">1640</div>
<div class="t cd" style="left:407px;top:517px">RST</div>
<div class="t cd" style="left:463px;top:517px">M51</div>
<div class="t cd" style="left:359px;top:532px;color:#007800">1642</div>
<div class="t cd" style="left:407px;top:532px">MCR</div>
<div class="t cd" style="left:359px;top:547px;color:#007800">1642</div>
<div class="t cd" style="left:407px;top:547px">MCR</div>
<div class="t cd" style="left:359px;top:562px;color:#007800">1642</div>
<div class="t cd" style="left:407px;top:562px">P0010</div>
<div class="t cd" style="left:359px;top:577px;color:#007800">1644</div>
<div class="t cd" style="left:407px;top:577px">LD</div>
<div class="t cd" style="left:463px;top:577px">M8000</div>
<div class="t cd" style="left:359px;top:592px;color:#007800">1646</div>
<div class="t cd" style="left:407px;top:592px">MCS</div>
<div class="t cd" style="left:359px;top:607px;color:#007800">1646</div>
<div class="t cd" style="left:407px;top:607px">LD&gt;</div>
<div class="t cd" style="left:463px;top:607px">D98</div>
<div class="t cd" style="left:519px;top:607px">K0</div>
<div class="t cd" style="left:359px;top:622px;color:#007800">1649</div>
<div class="t cd" style="left:407px;top:622px">OR</div>
<div class="t cd" style="left:463px;top:622px">M53</div>
<div class="t cd" style="left:359px;top:637px;color:#007800">1651</div>
<div class="t cd" style="left:407px;top:637px">OUT</div>
<div class="t cd" style="left:463px;top:637px">Y115</div>
<div class="t cd" style="left:359px;top:652px;color:#007800">1653</div>
<div class="t cd" style="left:407px;top:652px">LD</div>
<div class="t cd" style="left:463px;top:652px">M8000</div>
<div class="t cd" style="left:392px;top:667px;color:#e00000">?</div>
<div class="t cd" style="left:407px;top:667px">D0</div>
<div class="t cd" style="left:463px;top:667px">D0</div>
<div class="t cd" style="left:519px;top:667px">M9</div>
<div class="a" style="left:350px;top:698px;width:1050px;height:16px;border:1px solid #aca899;box-sizing:border-box;background:#ece9d8"></div>
<svg style="left:1368px;top:701px" width="32" height="12" viewBox="0 0 32 12"><path d="M3.500 1.500h4v5h-4z M2 6.500h7 M5.500 6.500v4" stroke="#000" fill="none"/><path d="M6.500 1.500v5" stroke="#000" stroke-width="1.500"/><path d="M18.500 2l7 7M25.500 2l-7 7" stroke="#000" stroke-width="1" fill="none"/></svg>
<div class="a" style="left:350px;top:734px;width:1048px;height:263px;background:#fcfcfa;border:1px solid #8c9cae;border-bottom:2px solid #8c9292;box-sizing:border-box"></div>
<div class="a" style="left:413px;top:717px;width:38px;height:17px;background:linear-gradient(to bottom,#fff 0,#f4f3ee 100%);border:1px solid #91a7b4;border-bottom:none;border-radius:3px 3px 0 0;box-sizing:border-box"></div>
<div class="a" style="left:350px;top:715px;width:64px;height:20px;background:#fcfcfe;border:1px solid #919b9c;border-bottom:none;border-top:2px solid #ffc73c;border-radius:3px 3px 0 0;box-sizing:border-box;box-shadow:0 -1px 0 #e68b2c"></div>
<div class="a" style="left:357px;top:739px;width:1036px;height:252px;background:#fff;border:1px solid #7f9db9;box-sizing:border-box"></div>
<div class="a" style="left:358px;top:740px;width:1034px;height:18px;background:#ebeadb;border-bottom:1px solid #dcd8c8;box-shadow:0 1px 0 #cdc9b9, 0 2px 0 #c4c0b0"></div>
<div class="a" style="left:377px;top:743px;width:1px;height:14px;background:#c7c5b2"></div><div class="a" style="left:378px;top:743px;width:1px;height:14px;background:#fff"></div>
<div class="a" style="left:379px;top:761px;width:1px;height:229px;background:#ece9d8"></div>
<div class="a" style="left:397px;top:743px;width:1px;height:14px;background:#c7c5b2"></div><div class="a" style="left:398px;top:743px;width:1px;height:14px;background:#fff"></div>
<div class="a" style="left:399px;top:761px;width:1px;height:229px;background:#ece9d8"></div>
<div class="a" style="left:717px;top:743px;width:1px;height:14px;background:#c7c5b2"></div><div class="a" style="left:718px;top:743px;width:1px;height:14px;background:#fff"></div>
<div class="a" style="left:719px;top:761px;width:1px;height:229px;background:#ece9d8"></div>
<div class="a" style="left:831px;top:743px;width:1px;height:14px;background:#c7c5b2"></div><div class="a" style="left:832px;top:743px;width:1px;height:14px;background:#fff"></div>
<div class="a" style="left:833px;top:761px;width:1px;height:229px;background:#ece9d8"></div>
<div class="a" style="left:875px;top:743px;width:1px;height:14px;background:#c7c5b2"></div><div class="a" style="left:876px;top:743px;width:1px;height:14px;background:#fff"></div>
<div class="a" style="left:877px;top:761px;width:1px;height:229px;background:#ece9d8"></div>
<div class="a" style="left:917px;top:743px;width:1px;height:14px;background:#c7c5b2"></div><div class="a" style="left:918px;top:743px;width:1px;height:14px;background:#fff"></div>
<div class="a" style="left:919px;top:761px;width:1px;height:229px;background:#ece9d8"></div>
<div class="a" style="left:359px;top:777px;width:1031px;height:1px;background:#f0ede1"></div>
<div class="a" style="left:359px;top:794px;width:1031px;height:1px;background:#f0ede1"></div>
<div class="a" style="left:359px;top:811px;width:1031px;height:1px;background:#f0ede1"></div>
<div class="a" style="left:359px;top:828px;width:1031px;height:1px;background:#f0ede1"></div>
<div class="a" style="left:359px;top:845px;width:1031px;height:1px;background:#f0ede1"></div>
<div class="a" style="left:359px;top:862px;width:1031px;height:1px;background:#f0ede1"></div>
<div class="a" style="left:359px;top:879px;width:1031px;height:1px;background:#f0ede1"></div>
<div class="a" style="left:359px;top:896px;width:1031px;height:1px;background:#f0ede1"></div>
<div class="a" style="left:359px;top:913px;width:1031px;height:1px;background:#f0ede1"></div>
<div class="a" style="left:359px;top:930px;width:1031px;height:1px;background:#f0ede1"></div>
<div class="a" style="left:359px;top:947px;width:1031px;height:1px;background:#f0ede1"></div>
<div class="a" style="left:359px;top:964px;width:1031px;height:1px;background:#f0ede1"></div>
<div class="a" style="left:359px;top:981px;width:1031px;height:1px;background:#f0ede1"></div>
<div class="a" style="left:359px;top:998px;width:1031px;height:1px;background:#f0ede1"></div>
<svg style="left:362px;top:760px" width="17" height="17" viewBox="0 0 17 17"><circle cx="9.700" cy="9.700" r="7.300" fill="#9a9a9a" opacity=".55"/><circle cx="8.500" cy="8.500" r="7.300" fill="url(#gErr)" stroke="#b01010" stroke-width=".8"/><path d="M5.500 5.500l6 6M11.500 5.500l-6 6" stroke="#fff" stroke-width="2.200" stroke-linecap="round"/></svg>
<svg style="left:362px;top:777px" width="17" height="17" viewBox="0 0 17 17"><circle cx="9.700" cy="9.700" r="7.300" fill="#9a9a9a" opacity=".55"/><circle cx="8.500" cy="8.500" r="7.300" fill="url(#gErr)" stroke="#b01010" stroke-width=".8"/><path d="M5.500 5.500l6 6M11.500 5.500l-6 6" stroke="#fff" stroke-width="2.200" stroke-linecap="round"/></svg>
<svg style="left:362px;top:794px" width="17" height="17" viewBox="0 0 17 17"><circle cx="9.700" cy="9.700" r="7.300" fill="#9a9a9a" opacity=".55"/><circle cx="8.500" cy="8.500" r="7.300" fill="url(#gErr)" stroke="#b01010" stroke-width=".8"/><path d="M5.500 5.500l6 6M11.500 5.500l-6 6" stroke="#fff" stroke-width="2.200" stroke-linecap="round"/></svg>
<div class="a" style="left:0;top:999px;width:1400px;height:21px;background:linear-gradient(to right,#9ebef5 0,#a4c2f6 30%,#bdd5f9 75%,#c3d9fa 100%)"></div>
<div class="a" style="left:0;top:1020px;width:1400px;height:4px;background:linear-gradient(to bottom,#2458c8 0,#3a80f0 1px,#2a68e4 100%)"></div>
<div class="a" style="left:0;top:1021px;width:94px;height:3px;background:linear-gradient(to bottom,#6ab070 0,#4c9c54 100%);border-radius:0 5px 0 0"></div>
<div class="a" style="left:1288px;top:1020px;width:112px;height:4px;background:linear-gradient(to bottom,#1468c8 0,#18a4f0 1px,#16b0f4 100%)"></div>
<div class="a" style="left:346px;top:997px;width:1054px;height:2px;background:#f8f7f3"></div>
<div class="a" style="left:1196px;top:997px;width:204px;height:23px;background:#fff"></div>
<svg style="left:1190px;top:990px" width="36" height="32" viewBox="0 0 36 32"><g transform="rotate(-14 18 16)"><rect x="6" y="4.500" width="24" height="23" rx="3" fill="#f4511e"/><path d="M24.500 9.500c-2-1.500-11-2-12 2.500-1 4.500 11 2.500 11 7 0 4.500-10 4-13 2" fill="none" stroke="#fff" stroke-width="3.400" stroke-linecap="round"/></g></svg>
<div class="t" style="left:1227px;top:1000px;line-height:20px;font-size:15px;font-weight:bold;color:#1f6dc8;font-family:'Liberation Sans','Noto Sans CJK SC',sans-serif">中</div>
<svg style="left:1248px;top:998px" width="152" height="22" viewBox="0 0 152 22"><g fill="none" stroke="#1f6dc8" stroke-width="1.600"><circle cx="4.500" cy="8" r="1.700" stroke-width="1.200"/><path d="M12 12.500c.8 1.500 .3 3-1.500 4.500" stroke-width="2" stroke-linecap="round"/><circle cx="31" cy="10" r="7.200"/><path d="M27.500 12c1.500 2.500 5.500 2.500 7 0"/><path d="M28.500 6.500v2.500M33.500 6.500v2.500" stroke-width="1.800"/><path d="M48 9c0 6 9 6 9 0M52.500 14v3.500M49.500 17.500h6"/><rect x="50.300" y="2.500" width="4.400" height="9.500" rx="2.200" fill="#1f6dc8"/><rect x="68" y="4.500" width="14.500" height="10.500" rx="1.500" stroke-width="1.800"/><path d="M70 7.500h11M70 9.800h11" stroke-width="1.500" stroke-dasharray="1.800 1.200"/><path d="M71 12.500h8.500" stroke-width="1.500"/></g><circle cx="98" cy="5.500" r="3" fill="#b4c0d4"/><path d="M92 16.500c0-5 2.500-7 6-7s6 2 6 7z" fill="#b4c0d4"/><rect x="101.500" y="11.500" width="5" height="5.500" fill="#fff" stroke="#b4c0d4"/><path d="M112 6.500l4-3c1.500 1.500 4.500 1.500 6 0l4 3-2 2.500-1.500-1v9h-7v-9l-1.500 1z" fill="#1f6dc8"/><rect x="134" y="4" width="5.500" height="5.500" fill="#1f6dc8"/><rect x="141.800" y="4.800" width="4.400" height="4.400" fill="#fff" stroke="#1f6dc8" stroke-width="1.400"/><rect x="134" y="11.500" width="5.500" height="5.500" fill="#1f6dc8"/><rect x="141" y="11.500" width="5.500" height="5.500" fill="#1f6dc8"/></svg>
<div id="gtext" style="position:absolute;left:0;top:0;width:1400px;height:1024px;will-change:transform;pointer-events:none">
<div class="t" id="title" style="left:22px;top:5px;line-height:16px;color:#dde6f9;font-weight:bold;text-shadow:1px 1px 0 rgba(70,90,160,.55)"><span class="tl">XCPPro - C:\Documents and Settings\Administrator\My Documents\</span><span class="tc">唐山码垛机程序</span><span class="tl">4\</span><span class="tc">唐山码垛机</span><span class="tl">3.xcp</span></div>
<div class="t ui mn" style="left:14px;top:32px">文件<span class="l k" style="margin-left:1px">(<u>F</u>)</span></div>
<div class="t ui mn" style="left:73px;top:32px">编辑<span class="l k" style="margin-left:1px">(<u>E</u>)</span></div>
<div class="t ui mn" style="left:131px;top:32px">查找<span class="l">\</span>替换<span class="l k" style="margin-left:1px">(<u>S</u>)</span></div>
<div class="t ui mn" style="left:221px;top:32px">显示<span class="l k" style="margin-left:1px">(<u>V</u>)</span></div>
<div class="t ui mn" style="left:280px;top:32px"><span class="l">PLC</span>操作<span class="l k" style="margin-left:1px">(<u>P</u>)</span></div>
<div class="t ui mn" style="left:357px;top:32px"><span class="l">PLC</span>设置<span class="l k" style="margin-left:1px">(<u>C</u>)</span></div>
<div class="t ui mn" style="left:434px;top:32px">选项<span class="l k" style="margin-left:1px">(<u>O</u>)</span></div>
<div class="t ui mn" style="left:493px;top:32px">窗口<span class="l k" style="margin-left:1px">(<u>W</u>)</span></div>
<div class="t ui mn" style="left:552px;top:32px">帮助<span class="l k" style="margin-left:1px">(<u>H</u>)</span></div>
<div class="t lbm" style="left:9px;top:111px;width:40px;text-align:center">Ins</div>
<div class="t lbm" style="left:45px;top:111px;width:40px;text-align:center">sIns</div>
<div class="t lbm" style="left:81px;top:111px;width:40px;text-align:center">Del</div>
<div class="t lbm" style="left:117px;top:111px;width:40px;text-align:center">sDel</div>
<div class="t lbs" style="left:153.5px;top:110px;width:40px;text-align:center">F5</div>
<div class="t lbs" style="left:189.5px;top:110px;width:40px;text-align:center">F6</div>
<div class="t lbs" style="left:225.5px;top:110px;width:40px;text-align:center">sF5</div>
<div class="t lbs" style="left:261.5px;top:110px;width:40px;text-align:center">sF6</div>
<div class="t lbs" style="left:298px;top:110px;width:40px;text-align:center">F7</div>
<div class="t lbs" style="left:333px;top:110px;width:40px;text-align:center">sF8</div>
<div class="t lbs" style="left:369px;top:110px;width:40px;text-align:center">sF7</div>
<div class="t lbs" style="left:405.5px;top:110px;width:40px;text-align:center">F8</div>
<div class="t lbs" style="left:442px;top:110px;width:40px;text-align:center">F11</div>
<div class="t lbs" style="left:478px;top:110px;width:40px;text-align:center">sF11</div>
<div class="t lbs" style="left:513.5px;top:110px;width:40px;text-align:center">F12</div>
<div class="t lbs" style="left:549.5px;top:110px;width:40px;text-align:center">sF12</div>
<div class="t ui" style="left:5px;top:130px">工程</div>
<div class="t ui" style="left:24px;top:980px;color:#808080">指令分类</div>
<div class="t ui" style="left:101px;top:980px">工程</div>
<div class="t tv" style="left:26px;top:148px">工程</div>
<div class="t tv" style="left:44px;top:166px"><span class="l">PLC1</span></div>
<div class="t tv" style="left:64px;top:184px">程序</div>
<div class="t tv" style="left:82px;top:202px">梯形图编程</div>
<div class="t tv" style="left:82px;top:220px">命令语编程</div>
<div class="t tv" style="left:82px;top:238px">函数功能块</div>
<div class="t tv" style="left:82px;top:256px">配置功能块</div>
<div class="t tv" style="left:82px;top:274px">顺序功能块</div>
<div class="t tv" style="left:64px;top:292px">软元件注释<span class="l">/</span>使用状况</div>
<div class="t tv" style="left:64px;top:310px">自由监控</div>
<div class="t tv" style="left:64px;top:328px">数据监控</div>
<div class="t tv" style="left:64px;top:346px">设置软元件初值</div>
<div class="t tv" style="left:64px;top:364px"><span class="l">PLC</span>配置</div>
<div class="t tv" style="left:82px;top:382px">密码</div>
<div class="t tv" style="left:82px;top:400px"><span class="l">PLC </span>串口</div>
<div class="t tv" style="left:82px;top:418px"><span class="l">BD</span></div>
<div class="t tv" style="left:82px;top:436px"><span class="l">CAN</span></div>
<div class="t tv" style="left:82px;top:454px">断电区域保存</div>
<div class="t tv" style="left:82px;top:472px">扩展模块</div>
<div class="t tv" style="left:82px;top:490px"><span class="l">I/O</span></div>
<div class="t tv" style="left:82px;top:508px"><span class="l">MA </span>扩展模块</div>
<div class="t tv" style="left:82px;top:526px">运动控制参数</div>
<div class="t tv" style="left:82px;top:544px"><span class="l">4GBOX</span></div>
<div class="t tv" style="left:82px;top:562px"><span class="l">WBOX</span></div>
<div class="t tv" style="left:64px;top:580px"><span class="l">PLC</span>信息</div>
<div class="t tv" style="left:82px;top:598px"><span class="l">PLC</span>本体信息</div>
<div class="t tv" style="left:82px;top:616px"><span class="l">BD</span>信息</div>
<div class="t tv" style="left:82px;top:634px">扩展模块信息</div>
<div class="t tv" style="left:82px;top:652px">扫描周期</div>
<div class="t tv" style="left:82px;top:670px">时钟信息</div>
<div class="t tv" style="left:82px;top:688px">错误信息</div>
<div class="t tv" style="left:64px;top:706px">记录</div>
<div class="t g" style="left:359px;top:134px;line-height:14px;font-weight:bold"><span style="font-family:'Liberation Serif',serif;font-size:12px;letter-spacing:-.2px">PLC1 -</span><span style="font-family:'Liberation Serif','Noto Serif CJK SC',serif;font-size:12px;margin-left:7px">命令语</span></div>
<div class="t ui" style="left:354px;top:700px">信息</div>
<div class="t ui" style="left:357px;top:718px">错误列表</div>
<div class="t ui" style="left:417px;top:720px">输出</div>
<div class="t ui" style="left:408px;top:745px">说明</div>
<div class="t ui" style="left:728px;top:745px">项目文件</div>
<div class="t ui" style="left:843px;top:745px">行</div>
<div class="t ui" style="left:887px;top:745px">列</div>
<div class="t tv" style="left:385px;top:762px;font-size:11px">1</div>
<div class="t tv" style="left:405px;top:763px">指令名称错误</div>
<div class="t tv" style="left:724px;top:763px"><span class="l" style="word-spacing:0">PLC1 - </span>命令语</div>
<div class="t tv" style="left:840px;top:762px;font-size:11px">212</div>
<div class="t tv" style="left:385px;top:779px;font-size:11px">2</div>
<div class="t tv" style="left:405px;top:780px">指令名称错误</div>
<div class="t tv" style="left:724px;top:780px"><span class="l" style="word-spacing:0">PLC1 - </span>命令语</div>
<div class="t tv" style="left:840px;top:779px;font-size:11px">256</div>
<div class="t tv" style="left:385px;top:796px;font-size:11px">3</div>
<div class="t tv" style="left:405px;top:797px">指令名称错误</div>
<div class="t tv" style="left:724px;top:797px"><span class="l" style="word-spacing:0">PLC1 - </span>命令语</div>
<div class="t tv" style="left:840px;top:796px;font-size:11px">854</div>
<div class="t ui" style="left:33px;top:1003px">行<span class="l"> 0,</span>列<span class="l"> 0</span></div>
<div class="t ui" style="left:127px;top:1003px">步数<span class="l">:1664</span></div>
<div class="t ui" style="left:192px;top:1003px">覆盖</div>
<div class="t ui" style="left:551px;top:1003px"><span class="l">PLC1:XC5-24-4PLS</span></div>
<div class="t ui" style="left:793px;top:1003px">通讯方式<span class="l">:Com</span>，站号<span class="l">:1</span></div>
</div>
</body></html>
